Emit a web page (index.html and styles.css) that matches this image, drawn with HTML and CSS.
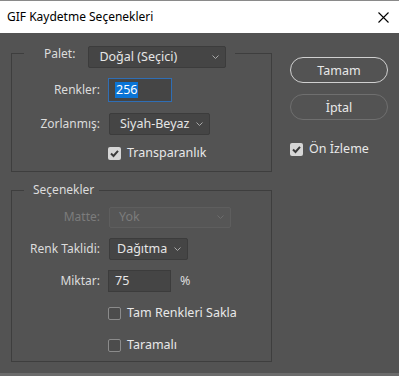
FILE: index.html
```html
<!DOCTYPE html>
<html lang="tr">
<head>
    <meta charset="UTF-8">
    <title>GIF Kaydetme Seçenekleri</title>
    <link rel="stylesheet" href="styles.css">
</head>
<body>
    <div class="dialog">
        <div class="titlebar">
            <span class="title">GIF Kaydetme Seçenekleri</span>
            <svg class="close" width="11" height="11" viewBox="0 0 11 11"><path d="M0.5 0.5 L10.5 10.5 M10.5 0.5 L0.5 10.5" stroke="#000" stroke-width="1.1" fill="none"/></svg>
        </div>

        <div class="content">
            <div class="groups">
                <fieldset class="group group-palette">
                    <legend>
                        <span class="palette-label">Palet:</span>
                        <div class="select select-palette">Doğal (Seçici)<svg class="chev" width="7" height="4" viewBox="0 0 7 4"><path d="M0.5 0.5 L3.5 3.5 L6.5 0.5" stroke="#a8a8a8" fill="none"/></svg></div>
                    </legend>
                    <div class="row">
                        <span class="label">Renkler:</span>
                        <div class="field focused"><span class="selected">256</span></div>
                    </div>
                    <div class="row">
                        <span class="label">Zorlanmış:</span>
                        <div class="select select-forced">Siyah-Beyaz<svg class="chev" width="7" height="4" viewBox="0 0 7 4"><path d="M0.5 0.5 L3.5 3.5 L6.5 0.5" stroke="#a8a8a8" fill="none"/></svg></div>
                    </div>
                    <div class="row check-row">
                        <span class="label"></span>
                        <span class="box checked"><svg width="13" height="13" viewBox="0 0 13 13"><path d="M3 6.5 L5.5 9 L10 3.8" stroke="#3a3a3a" stroke-width="2" fill="none"/></svg></span>
                        <span class="check-text">Transparanlık</span>
                    </div>
                </fieldset>

                <fieldset class="group group-options">
                    <legend>Seçenekler</legend>
                    <div class="row row-sm disabled">
                        <span class="label">Matte:</span>
                        <div class="select select-matte">Yok<svg class="chev" width="7" height="4" viewBox="0 0 7 4"><path d="M0.5 0.5 L3.5 3.5 L6.5 0.5" stroke="#6c6c6c" fill="none"/></svg></div>
                    </div>
                    <div class="row row-sm">
                        <span class="label">Renk Taklidi:</span>
                        <div class="select select-dither">Dağıtma<svg class="chev" width="7" height="4" viewBox="0 0 7 4"><path d="M0.5 0.5 L3.5 3.5 L6.5 0.5" stroke="#a8a8a8" fill="none"/></svg></div>
                    </div>
                    <div class="row row-sm">
                        <span class="label">Miktar:</span>
                        <div class="field">75</div>
                        <span class="unit">%</span>
                    </div>
                    <div class="row row-sm">
                        <span class="label"></span>
                        <span class="box"></span>
                        <span class="check-text">Tam Renkleri Sakla</span>
                    </div>
                    <div class="row row-sm">
                        <span class="label"></span>
                        <span class="box"></span>
                        <span class="check-text">Taramalı</span>
                    </div>
                </fieldset>
            </div>

            <div class="actions">
                <button class="btn btn-default">Tamam</button>
                <button class="btn">İptal</button>
                <div class="preview">
                    <span class="box checked"><svg width="13" height="13" viewBox="0 0 13 13"><path d="M3 6.5 L5.5 9 L10 3.8" stroke="#3a3a3a" stroke-width="2" fill="none"/></svg></span>
                    <span class="check-text">Ön İzleme</span>
                </div>
            </div>
        </div>
    </div>
</body>
</html>
```

FILE: styles.css
```css
* { box-sizing: border-box; }
html, body { margin: 0; }
body { font-family: "Noto Sans", "Segoe UI", sans-serif; font-size: 12px; line-height: 16px; color: #dcdcdc; background: #6b6b6b; }

.dialog { width: 399px; height: 373px; background: #535353; border-top: 1px solid #8a8a8a; }
.titlebar { height: 32px; background: #fff; color: #000; display: flex; align-items: center; justify-content: space-between; padding: 0 10px 0 7px; }
.close { margin-top: 1px; }

.content { display: flex; gap: 18px; padding: 0 11px; }
.groups { width: 261px; flex: none; }

.group { border: 1px solid #3e3e3e; margin: 0; padding: 0; min-width: 0; }
.group legend { margin-left: 12px; }
.group-palette { margin-top: 5px; padding: 5px 0 6px; }
.group-palette legend { display: flex; align-items: center; padding: 8px 9px 0 20px; }
.palette-label { margin-right: 13px; margin-bottom: 6px; }
.group-options { margin-top: 10px; padding: 3px 0 0; }
.group-options legend { padding: 0 5px 0 9px; }

.row { display: flex; align-items: center; height: 34px; }
.row-sm { height: 32px; }
.check-row { height: 24px; }
.label { width: 88px; margin-right: 8px; text-align: right; flex: none; }

.select { display: flex; align-items: center; height: 22px; padding: 0 6px 0 10px; margin-left: 1px; background: #454545; border: 1px solid #3c3c3c; border-radius: 2px; font-size: 12.5px; color: #e6e6e6; white-space: nowrap; }
.select .chev { margin-left: auto; flex: none; }
.select-palette { width: 138px; margin-left: 0; }
.select-forced { width: 101px; }
.select-matte { width: 122px; height: 21px; padding-left: 9px; }
.select-dither { width: 79px; padding-left: 7px; }

.field { display: flex; align-items: center; width: 63px; height: 22px; padding-left: 6px; background: #454545; border: 1px solid #3c3c3c; font-size: 12.5px; color: #e6e6e6; }
.field.focused { width: 64px; height: 24px; border-color: #2f6eb5; }
.selected { background: #0a74d6; color: #fff; padding: 0 1px; line-height: 16px; }
.unit { margin-left: 9px; font-size: 12.5px; }

.disabled .label { color: #7c7c7c; }
.disabled .select { background: #565656; border-color: #5e5e5e; color: #7c7c7c; }

.box { width: 13px; height: 13px; flex: none; border: 1px solid #8b8b8b; border-radius: 2px; background: #4c4c4c; margin-right: 6px; }
.box svg { display: block; }
.box.checked { border: none; background: #d6d6d6; }
.check-text { font-size: 12.5px; color: #e8e8e8; }

.actions { width: 98px; flex: none; display: flex; flex-direction: column; padding-top: 24px; }
.btn { height: 26px; border-radius: 13px; background: transparent; border: 1px solid #6f6f6f; color: #e8e8e8; font-family: inherit; font-size: 12.5px; padding: 0; cursor: pointer; }
.btn-default { border-color: #d0d0d0; margin-bottom: 11px; }
.preview { display: flex; align-items: center; margin-top: 21px; }
```
